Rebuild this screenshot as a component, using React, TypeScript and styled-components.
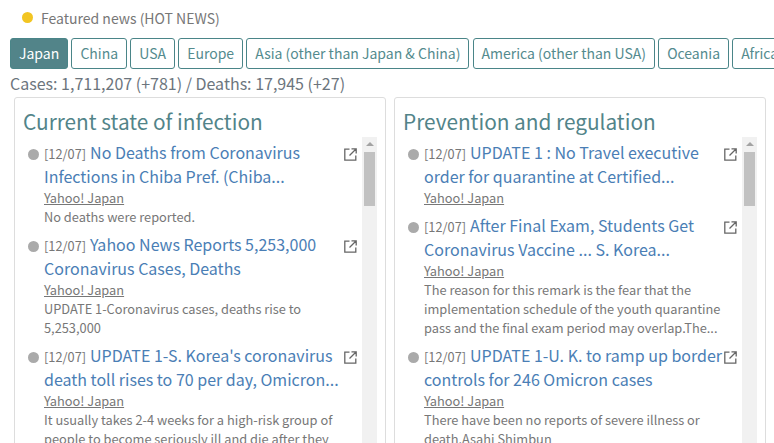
import React from 'react';
import styled, { createGlobalStyle } from 'styled-components';

const GlobalStyle = createGlobalStyle`
    html, body {
        margin: 0;
        padding: 0;
        height: 443px;
        overflow: hidden;
        background: #fff;
        font-family: "Noto Sans CJK JP", "Noto Sans", sans-serif;
        color: #6c757d;
    }
`;

const Page = styled.div`
    width: 774px;
    height: 443px;
    overflow: hidden;
`;

const Featured = styled.div`
    display: flex;
    align-items: center;
    height: 35px;
    padding-left: 22px;
    font-size: 14px;
    gap: 8px;
    color: #777;
`;

const Dot = styled.span`
    width: 11px;
    height: 11px;
    border-radius: 50%;
    background: #f2c522;
`;

const Tabs = styled.div`
    display: flex;
    gap: 3.15px;
    padding-left: 10px;
    margin-top: 3px;
    width: 900px;
`;

const Tab = styled.div<{ $active?: boolean }>`
    height: 31px;
    box-sizing: border-box;
    padding: 0 8px 2px;
    display: flex;
    align-items: center;
    border: 1px solid #4a8588;
    border-radius: 3px;
    font-size: 14px;
    white-space: nowrap;
    color: ${(p) => (p.$active ? '#fff' : '#548b8e')};
    background: ${(p) => (p.$active ? '#528489' : '#fff')};
`;

const Stats = styled.div`
    padding-left: 10px;
    font-size: 16px;
    line-height: 28px;
    height: 28px;
    color: #6c757d;
`;

const Columns = styled.div`
    display: flex;
    gap: 8px;
    padding-left: 14px;
`;

const Card = styled.section`
    width: 372px;
    height: 400px;
    box-sizing: border-box;
    border: 1px solid #ddd;
    border-radius: 3px;
    padding: 8px 8px 0;
    flex: none;
`;

const CardTitle = styled.h2`
    margin: 0;
    font-size: 20.8px;
    font-weight: 400;
    line-height: 30px;
    color: #528489;
`;

const ListWrap = styled.div`
    display: flex;
    margin-top: 1px;
`;

const List = styled.ul`
    list-style: none;
    margin: 0;
    padding: 3px 0 0;
    width: 339px;
    flex: none;
`;

const Item = styled.li`
    position: relative;
    padding-left: 21px;
    margin-bottom: 6px;
`;

const Bullet = styled.span`
    position: absolute;
    left: 5px;
    top: 9px;
    width: 11px;
    height: 11px;
    border-radius: 50%;
    background: #aaa;
`;

const Headline = styled.div`
    font-size: 16px;
    line-height: 24px;
    padding-right: 14px;
    color: #4a7eb5;
`;

const DateTag = styled.span`
    font-size: 12.8px;
    line-height: 1;
    color: #777;
    margin-right: 4px;
`;

const Source = styled.div`
    font-size: 12.8px;
    line-height: 19px;
    text-decoration: underline;
    color: #777;
`;

const Summary = styled.div`
    font-size: 12.8px;
    line-height: 19px;
    padding-right: 14px;
    color: #777;
`;

const External = styled.svg`
    position: absolute;
    right: 5px;
    top: 8px;
    width: 13px;
    height: 13px;
`;

const Scrollbar = styled.div`
    width: 15px;
    height: 320px;
    background: #f1f1f1;
    flex: none;
`;

const Arrow = styled.div`
    width: 0;
    height: 0;
    margin: 0 auto;
    position: relative;
    top: 5px;
    border-left: 4px solid transparent;
    border-right: 4px solid transparent;
    border-bottom: 4px solid #a3a3a3;
`;

const Thumb = styled.div`
    width: 11px;
    height: 54px;
    margin: 11px auto 0;
    background: #c1c1c1;
`;

interface NewsItem {
    title: string;
    summary: string;
}

const infection: NewsItem[] = [
    {
        title: 'No Deaths from Coronavirus Infections in Chiba Pref. (Chiba...',
        summary: 'No deaths were reported.',
    },
    {
        title: 'Yahoo News Reports 5,253,000 Coronavirus Cases, Deaths',
        summary: 'UPDATE 1-Coronavirus cases, deaths rise to 5,253,000',
    },
    {
        title: "UPDATE 1-S. Korea's coronavirus death toll rises to 70 per day, Omicron...",
        summary: 'It usually takes 2-4 weeks for a high-risk group of people to become seriously ill and die after they',
    },
];

const prevention: NewsItem[] = [
    {
        title: 'UPDATE 1 : No Travel executive order for quarantine at Certified...',
        summary: '',
    },
    {
        title: 'After Final Exam, Students Get Coronavirus Vaccine ... S. Korea...',
        summary: 'The reason for this remark is the fear that the implementation schedule of the youth quarantine pass and the final exam period may overlap.The...',
    },
    {
        title: 'UPDATE 1-U. K. to ramp up border controls for 246 Omicron cases',
        summary: 'There have been no reports of severe illness or death.Asahi Shimbun',
    },
];

const tabs = ['Japan', 'China', 'USA', 'Europe', 'Asia (other than Japan & China)', 'America (other than USA)', 'Oceania', 'Africa'];

const NewsCard = ({ title, items }: { title: string; items: NewsItem[] }) => (
    <Card>
        <CardTitle>{title}</CardTitle>
        <ListWrap>
            <List>
                {items.map((item) => (
                    <Item key={item.title}>
                        <Bullet />
                        <Headline><DateTag>[12/07]</DateTag>{item.title}</Headline>
                        <External viewBox="0 0 13 13" fill="none" stroke="#666" strokeWidth="1.3">
                            <path d="M5.5 1.2H.8v11h11V7.5M7.5.8h4.7v4.7M12 1 5.5 7.5" />
                        </External>
                        <Source>Yahoo! Japan</Source>
                        {item.summary && <Summary>{item.summary}</Summary>}
                    </Item>
                ))}
            </List>
            <Scrollbar>
                <Arrow />
                <Thumb />
            </Scrollbar>
        </ListWrap>
    </Card>
);

export default function App() {
    return (
        <Page>
            <GlobalStyle />
            <Featured><Dot />Featured news (HOT NEWS)</Featured>
            <Tabs>
                {tabs.map((tab, index) => (
                    <Tab key={tab} $active={index === 0}>{tab}</Tab>
                ))}
            </Tabs>
            <Stats>Cases: 1,711,207 (+781) / Deaths: 17,945 (+27)</Stats>
            <Columns>
                <NewsCard title="Current state of infection" items={infection} />
                <NewsCard title="Prevention and regulation" items={prevention} />
            </Columns>
        </Page>
    );
}
